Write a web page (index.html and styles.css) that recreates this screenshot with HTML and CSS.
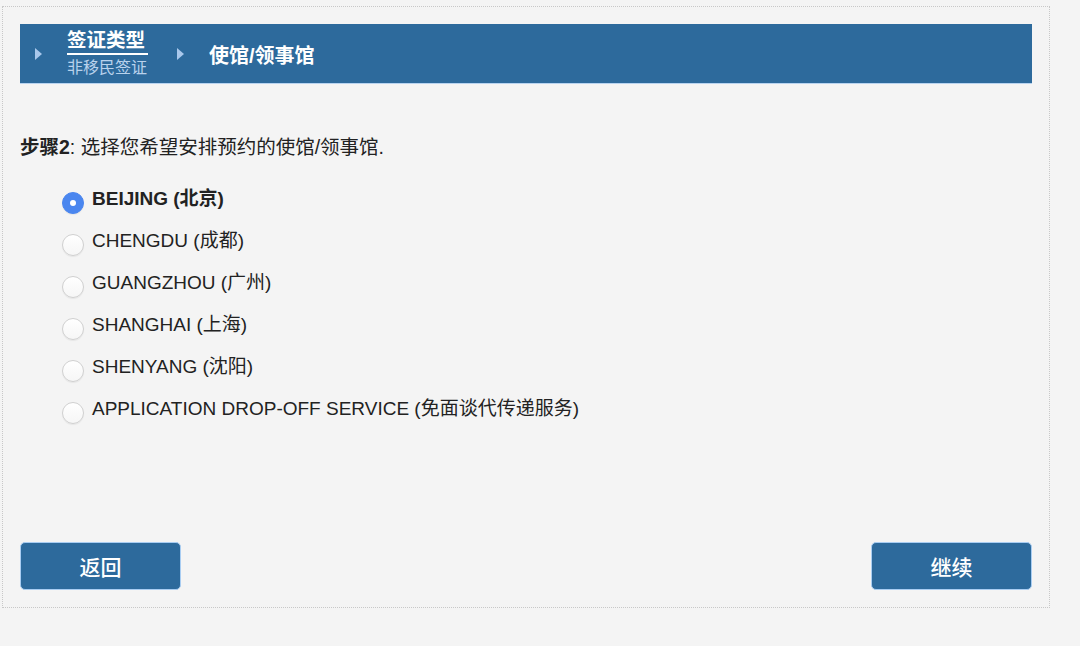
FILE: index.html
```html
<!DOCTYPE html>
<html lang="zh-CN">
<head>
  <meta charset="UTF-8">
  <meta name="viewport" content="width=device-width, initial-scale=1.0">
  <title>使馆/领事馆</title>
  <link rel="stylesheet" href="styles.css">
</head>
<body>

<div class="panel">
  <div class="crumbs">
    <span class="arrow"></span>
    <div class="crumb-done">
      <div class="crumb-title">签证类型</div>
      <div class="crumb-sub">非移民签证</div>
    </div>
    <span class="arrow"></span>
    <div class="crumb-current">使馆/领事馆</div>
  </div>

  <p class="step"><b>步骤2</b>: 选择您希望安排预约的使馆/领事馆.</p>

  <ul class="posts">
    <li><label><span class="radio checked"></span><b>BEIJING (北京)</b></label></li>
    <li><label><span class="radio"></span>CHENGDU (成都)</label></li>
    <li><label><span class="radio"></span>GUANGZHOU (广州)</label></li>
    <li><label><span class="radio"></span>SHANGHAI (上海)</label></li>
    <li><label><span class="radio"></span>SHENYANG (沈阳)</label></li>
    <li><label><span class="radio"></span>APPLICATION DROP-OFF SERVICE (免面谈代传递服务)</label></li>
  </ul>

  <div class="actions">
    <button class="btn">返回</button>
    <button class="btn">继续</button>
  </div>
</div>

</body>
</html>
```

FILE: styles.css
```css
body {
  margin: 0;
  padding: 6px 0 0 2px;
  background: #f4f4f4;
  font-family: "Liberation Sans", Arial, "Noto Sans CJK SC", sans-serif;
  color: #222;
}

.panel {
  width: 1012px;
  height: 566px;
  border: 1px dotted #c8c8c8;
  padding: 17px;
  display: flex;
  flex-direction: column;
}

.crumbs {
  background: #2d6a9c;
  border-bottom: 1px solid #b9d4f0;
  height: 59px;
  display: flex;
  align-items: center;
  padding-left: 15px;
  color: #fff;
}

.arrow {
  width: 0;
  height: 0;
  border-top: 6px solid transparent;
  border-bottom: 6px solid transparent;
  border-left: 7px solid #a9c8ec;
  margin-right: 25px;
}

.crumb-done {
  margin-right: 29px;
}

.crumb-title {
  font-size: 19.5px;
  font-weight: bold;
  line-height: 22px;
  padding-bottom: 2px;
  border-bottom: 2px solid #fff;
  width: 81px;
}

.crumb-sub {
  font-size: 16px;
  line-height: 22px;
  margin-top: 2px;
  color: #b9d2ec;
}

.crumb-current {
  font-size: 20px;
  font-weight: bold;
  margin-top: 1px;
}

.step {
  margin: 51px 0 0 0;
  font-size: 19.5px;
  line-height: 24px;
}

.posts {
  list-style: none;
  margin: 28px 0 0 0;
  padding: 0 0 0 42px;
}

.posts li {
  height: 42px;
  font-size: 19px;
}

.posts label {
  display: flex;
  align-items: flex-start;
  line-height: 24px;
}

.radio {
  width: 20px;
  height: 20px;
  border: 1px solid #d0d0d0;
  border-radius: 50%;
  background: linear-gradient(#fff, #f6f6f6);
  box-shadow: 0 1px 1px rgba(0, 0, 0, 0.06);
  margin: 5px 8px 0 0;
  flex-shrink: 0;
  position: relative;
}

.radio.checked {
  background: #4a86ef;
  border-color: #4a86ef;
}

.radio.checked::after {
  content: "";
  position: absolute;
  left: 7px;
  top: 7px;
  width: 6px;
  height: 6px;
  border-radius: 50%;
  background: #fff;
}

.actions {
  margin-top: auto;
  display: flex;
  justify-content: space-between;
}

.btn {
  width: 161px;
  height: 48px;
  background: #2d6a9c;
  color: #fff;
  border: 1px solid #a9cdf2;
  border-radius: 5px;
  font-family: "Noto Sans CJK SC", sans-serif;
  font-size: 21px;
  font-weight: 500;
  cursor: pointer;
}
```
